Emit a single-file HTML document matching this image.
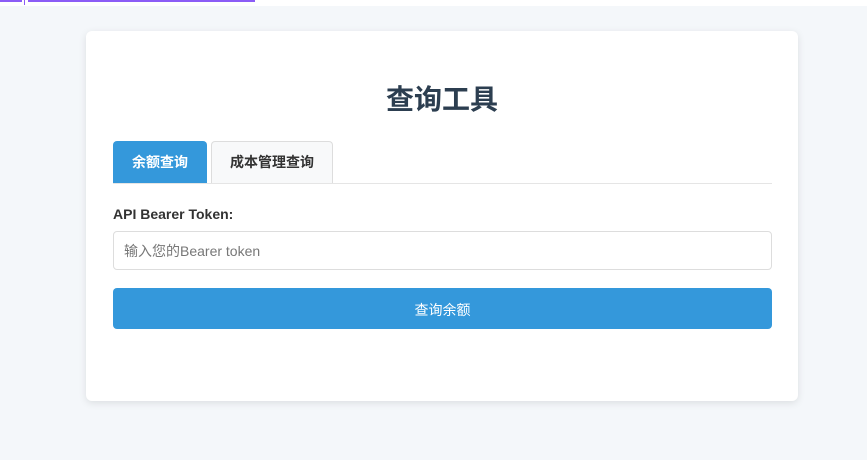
<!DOCTYPE html>
<html><head><meta charset="utf-8"><style>
*{box-sizing:border-box;margin:0;padding:0}
body{width:867px;height:460px;background:#f4f7fa;font-family:"Liberation Sans","Noto Sans CJK SC",sans-serif;position:relative;overflow:hidden}
.top{position:absolute;left:0;top:0;width:867px;height:6px;background:#fff}
.bar{position:absolute;top:0;height:2px;background:#8b5cf6}
.card{position:absolute;left:86px;top:31px;width:712px;height:370px;background:#fff;border-radius:6px;box-shadow:0 2px 8px rgba(0,0,0,.1)}
h1{position:absolute;left:86px;width:712px;top:82px;text-align:center;font-size:28px;color:#2c3e50;font-weight:bold;line-height:36px}
.tab{position:absolute;top:141px;height:42px;line-height:42px;font-size:14px;font-weight:bold;text-align:center;border-radius:4px 4px 0 0}
.line{position:absolute;left:113px;top:183px;width:659px;height:1px;background:#e5e5e5}
.lbl{position:absolute;left:113px;top:206px;font-size:14px;font-weight:bold;color:#333}
.inp{position:absolute;left:113px;top:231px;width:659px;height:39px;border:1px solid #ddd;border-radius:4px;font-size:14px;color:#777;padding-left:10px;line-height:38px}
.btn{position:absolute;left:113px;top:288px;width:659px;height:41px;background:#3498db;border-radius:4px;color:#fff;font-size:14px;text-align:center;line-height:44px}
</style></head><body>
<div class="top"></div>
<div class="bar" style="left:0;width:22px"></div>
<div class="bar" style="left:24px;width:1px;height:5px"></div>
<div class="bar" style="left:28px;width:227px"></div>
<div class="card"></div>
<h1>查询工具</h1>
<div class="tab" style="left:113px;width:94px;background:#3498db;color:#fff">余额查询</div>
<div class="tab" style="left:211px;width:122px;background:#f8f9fa;border:1px solid #ddd;border-bottom:none;color:#333;line-height:41px">成本管理查询</div>
<div class="line"></div>
<div class="lbl">API Bearer Token:</div>
<div class="inp">输入您的Bearer token</div>
<div class="btn">查询余额</div>
</body></html>
